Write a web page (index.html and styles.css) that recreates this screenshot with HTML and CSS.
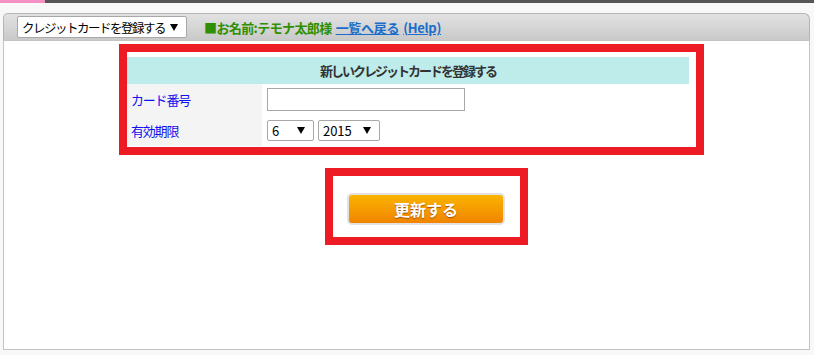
FILE: index.html
```html
<!DOCTYPE html>
<html lang="ja">
<head>
    <meta charset="UTF-8">
    <title>クレジットカードを登録する</title>
    <link rel="stylesheet" href="styles.css">
</head>
<body>
    <div class="topbar"><div class="topbar-pink"></div></div>
    <div class="wrap">
        <div class="toolbar">
            <select class="menu-select">
                <option>クレジットカードを登録する</option>
            </select>
            <span class="user-name">■お名前:テモナ太郎様</span>
            <a href="#" class="tool-link">一覧へ戻る</a>
            <a href="#" class="tool-link">(Help)</a>
        </div>
        <div class="panel">
            <div class="mark-box form-box">
                <table class="card-table">
                    <tr>
                        <th colspan="2">新しいクレジットカードを登録する</th>
                    </tr>
                    <tr>
                        <td class="label">カード番号</td>
                        <td class="field"><input type="text" class="card-input"></td>
                    </tr>
                    <tr>
                        <td class="label">有効期限</td>
                        <td class="field">
                            <select class="month-select"><option>6</option></select>
                            <select class="year-select"><option>2015</option></select>
                        </td>
                    </tr>
                </table>
            </div>
            <div class="mark-box button-box">
                <button class="update-btn">更新する</button>
            </div>
        </div>
    </div>
</body>
</html>
```

FILE: styles.css
```css
* {
    box-sizing: border-box;
    margin: 0;
    padding: 0;
    font-family: 'Noto Sans CJK JP', 'Liberation Sans', sans-serif;
}

body {
    background-color: #f8f8f8;
    width: 814px;
    height: 355px;
    overflow: hidden;
}

.topbar {
    height: 3px;
    background-color: #555;
}

.topbar-pink {
    width: 45px;
    height: 3px;
    background-color: #f590c4;
}

.wrap {
    padding: 10px 4px 0 3px;
}

.toolbar {
    height: 27px;
    display: flex;
    align-items: center;
    padding-left: 13px;
    border: 1px solid #b5b5b5;
    border-bottom: none;
    border-radius: 5px 6px 0 0;
    background: linear-gradient(#e2e2e2, #c9c9c9);
}

select {
    appearance: none;
    -webkit-appearance: none;
    background: #fff url("data:image/svg+xml,%3Csvg xmlns='http://www.w3.org/2000/svg' width='8' height='7'%3E%3Cpath d='M0 0h8L4 7z' fill='%23000'/%3E%3C/svg%3E") no-repeat right 8px center;
    border: 1px solid #a8a8a8;
    border-radius: 2px;
    font-size: 13px;
    color: #000;
    padding-left: 4px;
}

.menu-select {
    width: 170px;
    height: 22px;
    margin-right: 17px;
    font-size: 12.5px;
    letter-spacing: -1.5px;
    padding-right: 20px;
}

.user-name {
    color: #2f8f00;
    font-weight: bold;
    font-size: 13px;
    letter-spacing: -0.6px;
    margin-right: 4px;
}

.tool-link {
    color: #1a6ec9;
    font-weight: bold;
    font-size: 13px;
    letter-spacing: -0.3px;
    margin-right: 4px;
}

.panel {
    background-color: #fff;
    border: 1px solid #c4c4c4;
    height: 310px;
    display: flex;
    flex-direction: column;
    align-items: center;
    padding-top: 3px;
}

.mark-box {
    border: 8px solid #ed1c24;
}

.form-box {
    width: 585px;
    height: 111px;
    margin-left: 10px;
    padding: 5px 7px 0 0;
}

.card-table {
    width: 100%;
    border-collapse: collapse;
    font-size: 13px;
}

.card-table th {
    height: 27px;
    background-color: #bdeceb;
    color: #333;
    font-weight: bold;
    letter-spacing: -2px;
    text-align: center;
}

.card-table td {
    height: 31px;
}

.label {
    width: 135px;
    background-color: #f4f4f4;
    color: #1010ee;
    letter-spacing: -1.2px;
    padding-left: 4px;
}

.field {
    padding-left: 5px;
}

.card-input {
    display: block;
    width: 198px;
    height: 23px;
    border: 1px solid #a8a8a8;
}

.month-select {
    width: 47px;
    height: 21px;
    margin-right: 1px;
}

.year-select {
    width: 62px;
    height: 21px;
}

.button-box {
    width: 203px;
    height: 77px;
    margin-top: 13px;
    margin-left: 39px;
    display: flex;
    align-items: center;
    justify-content: center;
    padding-top: 5px;
}

.update-btn {
    width: 158px;
    height: 32px;
    border: 2px solid #e2e2e2;
    border-radius: 5px;
    background: linear-gradient(#fab400, #f08400);
    color: #fff;
    font-size: 16px;
    font-weight: bold;
    text-shadow: 0 1px 1px #a05000;
    cursor: pointer;
}
```
